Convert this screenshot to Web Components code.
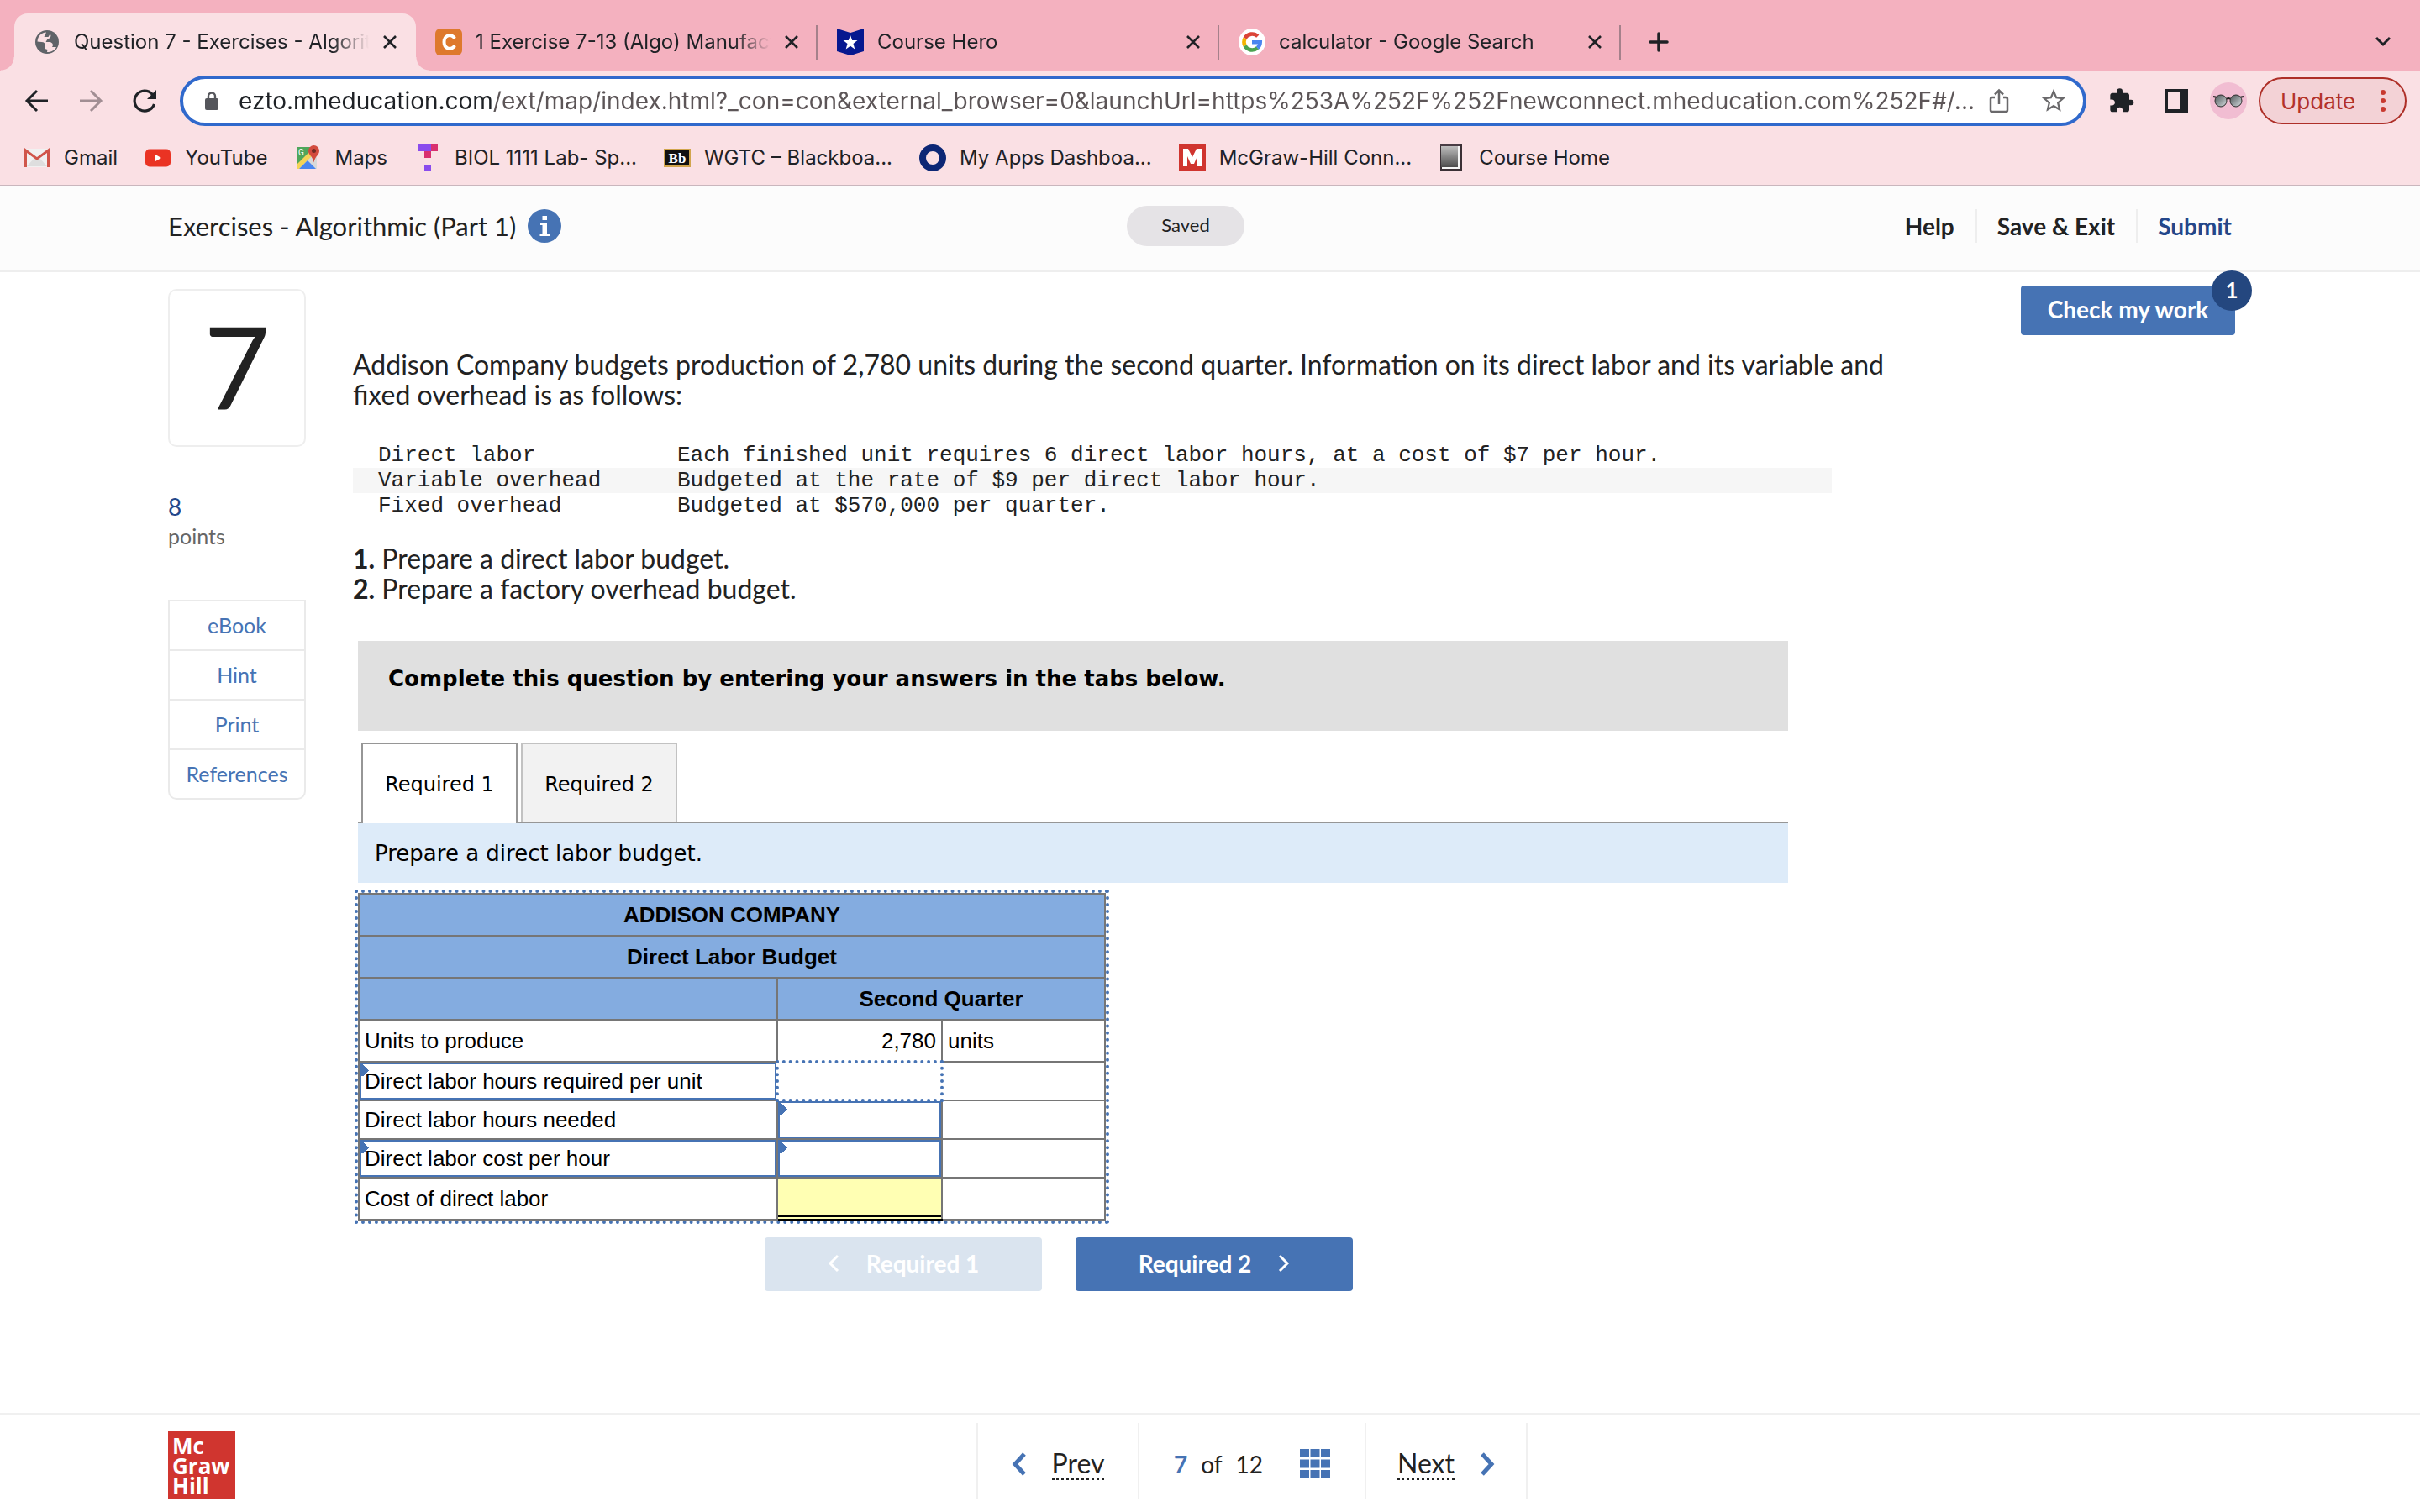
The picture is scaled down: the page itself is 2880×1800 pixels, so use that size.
<!DOCTYPE html>
<html lang="en">
<head>
<meta charset="utf-8">
<title>Question 7 - Exercises - Algorithmic (Part 1)</title>
<style>
html,body{margin:0;height:100%}
body{font-family:Lato,sans-serif;color:#222;background:#fff}
</style>
</head>
<body>
<exam-app></exam-app>
<script>
const define = (name, css, html) => customElements.define(name, class extends HTMLElement {
  connectedCallback() {
    if (this.shadowRoot) return;
    const t = document.createElement('template');
    const markup = typeof html === 'function' ? html(this) : html;
    t.innerHTML = '<style>*{box-sizing:border-box}button,input{font:inherit;color:inherit;margin:0;padding:0;border:0;background:none}a{color:inherit;text-decoration:none}svg{display:block;flex:none}' + css + '</style>' + markup;
    this.attachShadow({mode: 'open'}).append(t.content.cloneNode(true));
  }
});

const icons = {
  globe: '<svg width="32" height="32" viewBox="0 0 32 32"><circle cx="16" cy="16" r="14" fill="#5f6368"/><path d="M4.500 15.500C5 9 9 5 15 4.500L13.500 8l-1 2h5l2-3.500 1 1.500c0 3-2 4-4 4.500l-2 3.500h3.500c3.500 0 5 2 5 4l-1 2h5c-2 4-6 6-11 6l.5-3-3-1v-4c0-2.500-1-4-4-4z" fill="#fae0e4"/></svg>',
  c: '<svg width="32" height="32" viewBox="0 0 32 32"><rect width="32" height="32" rx="6" fill="#de792d"/><path d="M22.500 10.500C17 5.500 10.500 9 10.500 16s6.500 10.500 12 5.500" fill="none" stroke="#fff" stroke-width="4" stroke-linecap="round"/></svg>',
  hero: '<svg width="32" height="32" viewBox="0 0 32 32"><path d="M0 0l16 5L32 0v27l-16 5-16-5z" fill="#06188f"/><path d="M16 8l2.200 6h6.300l-5 4 1.800 6.500L16 20.700l-5.300 3.800L12.500 18l-5-4h6.300z" fill="#fff"/></svg>',
  google: '<svg width="32" height="32" viewBox="0 0 32 32"><circle cx="16" cy="16" r="16" fill="#fff"/><g fill="none" stroke-width="4.600"><path d="M7.600 11.500A9.700 9.700 0 0 1 22.800 9.200" stroke="#db4437"/><path d="M7.600 20.500a9.700 9.700 0 0 1 0-9" stroke="#f4b400"/><path d="M22.500 23.100a9.700 9.700 0 0 1-14.900-2.600" stroke="#4ba350"/><path d="M16 16.200h9.700a9.700 9.700 0 0 1-3.200 6.900" stroke="#4a86f0"/></g></svg>',
  x: '<svg width="18" height="18" viewBox="0 0 18 18" stroke="#1f2226" stroke-width="2.600"><path d="M2 2l14 14M16 2L2 16"/></svg>',
  gmail: '<svg width="32" height="32" viewBox="0 0 32 32"><rect x="2" y="5" width="28" height="22" rx="2" fill="#f1f1f1"/><path d="M4 26l9-10 3 2 3-2 9 10z" fill="#dedede"/><path d="M2.500 27V7L16 17 29.500 7v20" fill="none" stroke="#d0564b" stroke-width="3"/></svg>',
  youtube: '<svg width="32" height="32" viewBox="0 0 32 32"><rect x="1" y="5.500" width="30" height="21" rx="5" fill="#ea3323"/><path d="M13 12v8l7-4z" fill="#fff"/></svg>',
  maps: '<svg width="32" height="32" viewBox="0 0 32 32"><path d="M3 3h24v26H3z" fill="#d9d9d9"/><path d="M3 3h22L3 27z" fill="#4fa65b"/><path d="M3 24L20 7l4 4L6 29H3z" fill="#f4d458"/><path d="M6 29l10-10 10 10z" fill="#4a86f0"/><text x="5" y="13" font-family="Roboto" font-size="10" fill="#fff">G</text><path d="M23.500 1a6.500 6.500 0 0 0-6.500 6.500c0 5 5 6 6.500 14 1.500-8 6.500-9 6.500-14A6.500 6.500 0 0 0 23.500 1z" fill="#d34b3e"/><circle cx="23.500" cy="7.500" r="2.500" fill="#722b24"/></svg>',
  t: '<svg width="32" height="32" viewBox="0 0 32 32"><path d="M4 0h16v8H4z" fill="#8a4ced"/><path d="M20 0h8v8h-8zM12 8h8v8h-8z" fill="#d9306f"/><path d="M12 24h8v8h-8z" fill="#8a4ced"/></svg>',
  bb: '<svg width="32" height="32" viewBox="0 0 32 32"><rect x="1" y="6" width="30" height="20" fill="#111" stroke="#d1a54c" stroke-width="2"/><text x="16" y="22" text-anchor="middle" font-family="Liberation Serif" font-weight="bold" font-size="17" fill="#fff">Bb</text></svg>',
  o: '<svg width="32" height="32" viewBox="0 0 32 32"><circle cx="16" cy="16" r="12" fill="none" stroke="#0c2775" stroke-width="8"/></svg>',
  m: '<svg width="32" height="32" viewBox="0 0 32 32"><path d="M0 0h32v32H0z" fill="#d0352f"/><path d="M5 26V5h6l5 10 5-10h6v21h-5V14l-4 9h-4l-4-9v12z" fill="#fff"/></svg>',
  book: '<svg width="32" height="32" viewBox="0 0 32 32"><defs><linearGradient id="g" x2="0" y2="1"><stop stop-color="#c4c4c4"/><stop offset="1" stop-color="#4c4c4c"/></linearGradient></defs><path d="M3 1h24v29H3z" fill="#f5f5f5" stroke="#3a3035" stroke-width="2"/><path d="M3 1h20v26H3z" fill="url(#g)"/><path d="M2 1h23" stroke="#4a3d45" stroke-width="2"/></svg>'
};

define('chrome-tab',
  `:host{display:flex;width:478px;height:68px;align-items:center;gap:16px;padding:0 22px 0 23px;position:relative;font-size:24px;line-height:32px;color:#1f2226}
  :host([active]){background:#fae0e4;border-radius:16px 16px 0 0}
  :host([active])::before,:host([active])::after{content:"";position:absolute;bottom:0;width:16px;height:16px}
  :host([active])::before{left:-16px;background:radial-gradient(circle at 0 0,transparent 15px,#fae0e4 16px)}
  :host([active])::after{right:-16px;background:radial-gradient(circle at 100% 0,transparent 15px,#fae0e4 16px)}
  :host([sep]){border-right:2px solid;border-image:linear-gradient(transparent 15px,#a5818b 15px,#a5818b 55px,transparent 55px) 1;padding-right:20px}
  span{flex:1;min-width:0;overflow:hidden;white-space:nowrap;-webkit-mask:linear-gradient(90deg,#000 calc(100% - 44px),transparent);mask:linear-gradient(90deg,#000 calc(100% - 44px),transparent)}
  button{display:flex}`,
  el => `${icons[el.getAttribute('icon')]}<span><slot></slot></span><button aria-label="Close tab">${icons.x}</button>`);

define('chrome-tabs',
  `:host{display:flex;background:#f4b1bf;height:84px;padding:16px 34px 0 17px;align-items:center}
  .plus{margin-left:33px}.more{margin-left:auto}`,
  `<chrome-tab active icon="globe">Question 7 - Exercises - Algorithmic</chrome-tab>
  <chrome-tab icon="c" sep>1 Exercise 7-13 (Algo) Manufacturing</chrome-tab>
  <chrome-tab icon="hero" sep>Course Hero</chrome-tab>
  <chrome-tab icon="google" sep>calculator - Google Search</chrome-tab>
  <button class="plus" aria-label="New tab"><svg width="24" height="24" stroke="#1f2226" stroke-width="3.500" stroke-linecap="round"><path d="M12 2v20M2 12h20"/></svg></button>
  <button class="more" aria-label="Search tabs"><svg width="20" height="14" fill="none" stroke="#1f2226" stroke-width="3"><path d="M2 2l8 8 8-8"/></svg></button>`);

define('chrome-toolbar',
  `:host{display:flex;align-items:center;height:72px;background:#fae0e4;padding:0 16px 0 28px;color:#1f2226}
  button{display:flex}
  .nav{display:flex;gap:32px;margin-right:26px}
  .url{flex:1;display:flex;align-items:center;height:60px;border:4px solid #3069cc;border-radius:30px;background:#fff;padding:0 18px 0 25px;min-width:0}
  input{flex:1;min-width:0;margin-left:23px;font-size:28px;outline:0;height:44px;text-overflow:clip;
    background:linear-gradient(90deg,#1f2226 301px,#5c5557 301px);-webkit-background-clip:text;background-clip:text;-webkit-text-fill-color:transparent}
  .url button+button{margin-left:32px}
  .right{display:flex;align-items:center;gap:34px;margin:0 14px 0 27px}
  .upd{height:56px;border:2px solid #ae2f28;border-radius:28px;background:#f3d2d6;color:#b3322a;font-size:26px;align-items:center;justify-content:space-between;width:176px;padding:0 22px 0 24px}
  .av{margin-left:-8px}`,
  `<div class="nav">
   <button aria-label="Back"><svg width="32" height="32" fill="none" stroke="#1f2226" stroke-width="3"><path d="M29 16H5M16 4L4 16l12 12"/></svg></button>
   <button aria-label="Forward"><svg width="32" height="32" fill="none" stroke="#a18e93" stroke-width="3"><path d="M3 16h24M16 4l12 12-12 12"/></svg></button>
   <button aria-label="Reload"><svg width="32" height="32" fill="none" stroke="#1f2226" stroke-width="3.200"><path d="M27.500 20A12 12 0 1 1 25 8l2 3"/><path d="M30 3v11H19z" fill="#1f2226" stroke="none"/></svg></button></div>
  <div class="url">
   <svg width="18" height="24" viewBox="0 0 18 24"><rect x="1" y="9" width="16" height="14" rx="2" fill="#55565b"/><path d="M5 10V6.500a4 4 0 0 1 8 0V10" fill="none" stroke="#55565b" stroke-width="2.400"/></svg>
   <input aria-label="Address" spellcheck="false" value="ezto.mheducation.com/ext/map/index.html?_con=con&amp;external_browser=0&amp;launchUrl=https%253A%252F%252Fnewconnect.mheducation.com%252F#/...">
   <button aria-label="Share"><svg width="32" height="32" fill="none" stroke="#6a696b" stroke-width="2.500"><path d="M11 12H8a2 2 0 0 0-2 2v13a2 2 0 0 0 2 2h16a2 2 0 0 0 2-2V14a2 2 0 0 0-2-2h-3M16 20V4M11 8.500L16 3.500l5 5"/></svg></button>
   <button aria-label="Bookmark"><svg width="34" height="34" viewBox="0 0 24 24" fill="#6a696b"><path d="M22 9.240l-7.190-.62L12 2 9.190 8.630 2 9.240l5.460 4.730L5.820 21 12 17.270 18.180 21l-1.630-7.030L22 9.240zM12 15.400l-3.760 2.270 1-4.280-3.320-2.880 4.380-.38L12 6.100l1.710 4.040 4.380.38-3.320 2.880 1 4.280L12 15.400z"/></svg></button></div>
  <div class="right">
   <button aria-label="Extensions"><svg width="32" height="32" viewBox="1 0 24 24" fill="#1f2226"><path d="M20.500 11H19V7c0-1.100-.9-2-2-2h-4V3.500a2.500 2.500 0 0 0-5 0V5H4c-1.100 0-1.990.9-1.990 2v3.800H3.500c1.490 0 2.700 1.210 2.700 2.700s-1.210 2.700-2.700 2.700H2V20c0 1.100.9 2 2 2h3.800v-1.500c0-1.490 1.210-2.700 2.700-2.700s2.700 1.210 2.700 2.700V22H17c1.100 0 2-.9 2-2v-4h1.500a2.500 2.500 0 0 0 0-5z"/></svg></button>
   <button aria-label="Side panel"><svg width="28" height="28"><path d="M0 0h28v28H0z" fill="#1f2226"/><path d="M4 4h14v20H4z" fill="#fae0e4"/></svg></button>
   <button class="av" aria-label="Profile"><svg width="44" height="44"><defs><linearGradient id="l" x2="1" y2="1"><stop stop-color="#4a5254"/><stop offset="1" stop-color="#d5dde0"/></linearGradient></defs><circle cx="22" cy="22" r="22" fill="#f1bdd2"/><path d="M4 17l5 1M40 17l-5 1M20 20q2-2 4 0" fill="none" stroke="#222" stroke-width="2"/><circle cx="13" cy="22" r="7" fill="url(#l)" stroke="#2b2b2b"/><circle cx="31" cy="22" r="7" fill="url(#l)" stroke="#2b2b2b"/></svg></button></div>
  <button class="upd">Update<svg width="8" height="28" fill="#c8392f"><circle cx="4" cy="4" r="3"/><circle cx="4" cy="14" r="3"/><circle cx="4" cy="24" r="3"/></svg></button>`);

define('bookmark-link',
  `:host{display:block}a{display:flex;align-items:center;gap:16px;font-size:24px;line-height:32px;color:#1f2226;white-space:nowrap}`,
  el => `<a href="#">${icons[el.getAttribute('icon')]}<slot></slot></a>`);

define('chrome-bookmarks',
  `:host{display:flex;gap:32px;align-items:center;height:66px;background:#fae0e4;border-bottom:2px solid #c9b6bd;padding:0 28px}`,
  `<bookmark-link icon="gmail">Gmail</bookmark-link><bookmark-link icon="youtube">YouTube</bookmark-link><bookmark-link icon="maps">Maps</bookmark-link><bookmark-link icon="t">BIOL 1111 Lab- Sp...</bookmark-link><bookmark-link icon="bb">WGTC – Blackboa...</bookmark-link><bookmark-link icon="o">My Apps Dashboa...</bookmark-link><bookmark-link icon="m">McGraw-Hill Conn...</bookmark-link><bookmark-link icon="book">Course Home</bookmark-link>`);

define('exam-header',
  `:host{display:grid;grid-template-columns:1141fr auto 1175fr;align-items:center;height:102px;padding:0 224px 6px 200px;background:#fcfcfc;border-bottom:2px solid #eee}
  h1{margin:0;font-size:31px;line-height:40px;font-weight:400;display:flex;align-items:center;gap:14px;white-space:nowrap}
  .saved{width:140px;height:48px;line-height:46px;border-radius:24px;background:#e5e3e6;text-align:center;font-size:22px}
  nav{display:flex;justify-content:flex-end;font-weight:700;font-size:28px;line-height:40px}
  nav a+a{border-left:2px solid #eee;margin-left:25px;padding-left:24px}
  .s{color:#24478a}`,
  `<h1>Exercises - Algorithmic (Part 1)<svg width="40" height="40"><circle cx="20" cy="20" r="20" fill="#4673b4"/><path d="M17.500 8h5.500v5h-5.500zM15 16h8v13h3v3H14.500v-3h3V19H15z" fill="#fff"/></svg></h1>
  <div class="saved">Saved</div><nav><a href="#">Help</a><a href="#">Save &amp; Exit</a><a href="#" class="s">Submit</a></nav>`);

define('question-rail',
  `:host{display:block}
  .n{height:188px;border:2px solid #eee;border-radius:10px;font-size:136px;line-height:178px;text-align:center}
  .p{color:#24478a;font-size:28px;line-height:36px;margin-top:53px}
  .q{color:#666;font-size:25px;line-height:34px}
  nav{margin-top:59px;border:2px solid #eaeaea;border-radius:0 0 10px 10px;color:#4673b4;font-size:25px;text-align:center}
  a{display:block;line-height:57px}a+a{border-top:2px solid #eaeaea}`,
  `<div class="n">7</div><div class="p">8</div><div class="q">points</div><nav><a href="#">eBook</a><a href="#">Hint</a><a href="#">Print</a><a href="#">References</a></nav>`);

define('budget-table',
  `:host{display:block;margin-top:12px;font-family:"Liberation Sans",sans-serif;font-size:26px;line-height:30px}
  table{border-collapse:collapse;table-layout:fixed;width:890px;outline:4px dotted #4673b4}
  tr{height:50px}tr.s{height:46px}
  td,th{border:2px solid #767676;padding:0;text-align:left;font-weight:400}
  thead th{background:#84ace0;text-align:center;font-weight:700}
  tbody th,.u{padding-left:6px}.r{text-align:right;padding-right:6px}
  tbody th.b{padding:0}
  button,input{display:block;width:100%;height:44px;border:2px solid #4673b4;text-align:left}
  button{padding-left:4px}
  .m,button{background:conic-gradient(from 225deg at 9px 7px,#4673b4 90deg,transparent 0) 0 0/9px 14px no-repeat}
  input.d{border:0;box-shadow:0 0 0 2px #fff;outline:4px dotted #4673b4;outline-offset:-1px;position:relative}
  .y{background:#ffffb3;border-top:2px solid #000;border-bottom:2px solid #000;vertical-align:top}
  .y input{border:0;border-bottom:2px solid #000;height:46px}`,
  `<table><colgroup><col style="width:498px"><col style="width:196px"><col></colgroup>
  <thead><tr><th colspan="3">ADDISON COMPANY</th></tr><tr><th colspan="3">Direct Labor Budget</th></tr><tr><th></th><th colspan="2">Second Quarter</th></tr></thead>
  <tbody><tr><th>Units to produce</th><td class="r">2,780</td><td class="u">units</td></tr>
  <tr class="s"><th class="b"><button>Direct labor hours required per unit</button></th><td><input class="d" aria-label="Direct labor hours required per unit"></td><td></td></tr>
  <tr class="s"><th>Direct labor hours needed</th><td><input class="m" aria-label="Direct labor hours needed"></td><td></td></tr>
  <tr class="s"><th class="b"><button>Direct labor cost per hour</button></th><td><input class="m" aria-label="Direct labor cost per hour"></td><td></td></tr>
  <tr><th>Cost of direct labor</th><td class="y"><input aria-label="Cost of direct labor"></td><td></td></tr></tbody></table>`);

define('answer-tabs',
  `:host{display:block;width:1702px;margin:44px 0 0 6px;font-family:"DejaVu Sans",sans-serif;font-size:26px;line-height:32px;color:#000}
  .g{height:107px;padding:29px 36px;background:#e0e0e0;font-weight:700}
  .t{display:flex;gap:4px;margin-top:14px;padding-left:4px;border-bottom:2px solid #969696}
  .t button{width:186px;height:94px;border:2px solid #c2c2c2;border-bottom:0;background:#f2f2f2;padding-top:4px;font-size:24px}
  .t .on{height:96px;margin-bottom:-2px;border-color:#969696;background:#fff;position:relative;padding-top:2px}
  .i{background:#ddebf9;padding:20px;height:71px}
  .f{display:flex;justify-content:center;gap:40px;padding-right:34px;margin-top:20px;font:700 28px/32px Lato,sans-serif}
  .f button{width:330px;height:64px;border-radius:4px;background:#4673b4;color:#fff;display:flex;align-items:center;justify-content:center;gap:32px;padding-bottom:2px}
  .f .off{background:#dae4ef}`,
  `<div class="g">Complete this question by entering your answers in the tabs below.</div>
  <div class="t" role="tablist"><button class="on" role="tab">Required 1</button><button role="tab">Required 2</button></div>
  <div class="i">Prepare a direct labor budget.</div>
  <budget-table></budget-table>
  <div class="f"><button class="off"><svg width="14" height="22" fill="none" stroke="#fff" stroke-width="3"><path d="M12 2L3 11l9 9"/></svg>Required 1</button><button>Required 2<svg width="14" height="22" fill="none" stroke="#fff" stroke-width="3"><path d="M2 2l9 9-9 9"/></svg></button></div>`);

define('question-body',
  `:host{display:block;padding-top:72px;font-size:32px;line-height:36px}
  p{margin:0;white-space:nowrap}
  table{margin:39px 0 30px;width:1760px;border-collapse:collapse;font:26px/30px "Liberation Mono",monospace}
  th,td{padding:0;font-weight:400;text-align:left}th{width:386px;padding-left:30px}
  tr:nth-child(2){background:#f6f6f6}`,
  `<p>Addison Company budgets production of 2,780 units during the second quarter. Information on its direct labor and its variable and<br>fixed overhead is as follows:</p>
  <table><tr><th>Direct labor</th><td>Each finished unit requires 6 direct labor hours, at a cost of $7 per hour.</td></tr><tr><th>Variable overhead</th><td>Budgeted at the rate of $9 per direct labor hour.</td></tr><tr><th>Fixed overhead</th><td>Budgeted at $570,000 per quarter.</td></tr></table>
  <p><b>1.</b> Prepare a direct labor budget.<br><b>2.</b> Prepare a factory overhead budget.</p>
  <answer-tabs></answer-tabs>`);

define('check-work',
  `:host{display:block;margin-top:-4px;position:relative}
  button{width:255px;height:59px;border-radius:4px;background:#4673b4;color:#fff;font-weight:700;font-size:28px;padding-bottom:4px}
  span{position:absolute;top:-18px;right:-20px;width:48px;height:48px;border-radius:50%;background:#24477f;color:#fff;font-weight:700;font-size:26px;line-height:46px;text-align:center}`,
  `<button>Check my work</button><span>1</span>`);

define('exam-footer',
  `:host{display:grid;grid-template-columns:962fr auto 1062fr;border-top:2px solid #f0f0f0;height:118px;padding:10px 0 18px 200px;font-size:32px;line-height:36px}
  .logo{width:80px;height:80px;margin-top:10px;background:#d0352f;color:#fff;font:700 26px/24px "Open Sans",sans-serif;padding:5px}
  nav{display:flex;border-left:2px solid #f0f0f0}
  nav>*{display:flex;align-items:center;justify-content:center;border-right:2px solid #f0f0f0;padding-top:8px}
  .a{width:192px;gap:30px}.c{width:270px;gap:16px;font-size:28px}
  u{text-decoration:none;border-bottom:3px dotted #222;line-height:34px}
  b{color:#4673b4}.c button{margin-left:28px}`,
  `<div><div class="logo">Mc<br>Graw<br>Hill</div></div>
  <nav><a class="a" href="#"><svg width="18" height="28" fill="none" stroke="#4673b4" stroke-width="5"><path d="M15 2L4 14l11 12"/></svg><u>Prev</u></a>
  <div class="c"><b>7</b><span>of</span><span>12</span><button aria-label="Question list"><svg width="36" height="36" fill="#4673b4"><path d="M0 0h11v10H0zM12.500 0h11v10h-11zM25 0h11v10H25zM0 12.500h11v10H0zM12.500 12.500h11v10h-11zM25 12.500h11v10H25zM0 25h11v10H0zM12.500 25h11v10h-11zM25 25h11v10H25z"/></svg></button></div>
  <a class="a" href="#"><u>Next</u><svg width="18" height="28" fill="none" stroke="#4673b4" stroke-width="5"><path d="M3 2l11 12L3 26"/></svg></a></nav>`);

define('exam-app',
  `:host{display:flex;flex-direction:column;min-height:100vh}
  .chrome{font-family:Inter,sans-serif}
  main{flex:1;display:grid;grid-template-columns:164px 1fr auto;column-gap:56px;padding:20px 220px 0 200px;align-items:start}`,
  `<div class="chrome"><chrome-tabs></chrome-tabs><chrome-toolbar></chrome-toolbar><chrome-bookmarks></chrome-bookmarks></div>
  <exam-header></exam-header><main><question-rail></question-rail><question-body></question-body><check-work></check-work></main><exam-footer></exam-footer>`);
</script>
</body>
</html>
